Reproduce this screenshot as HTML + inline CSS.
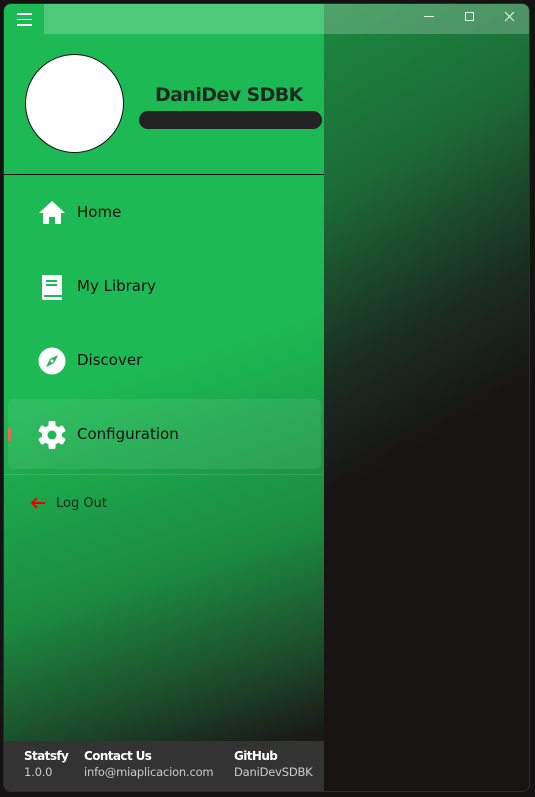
<!DOCTYPE html>
<html><head><meta charset="utf-8"><style>
*{margin:0;padding:0;box-sizing:border-box}
html,body{width:535px;height:797px;background:#141212;overflow:hidden;font-family:"Liberation Sans","DejaVu Sans",sans-serif}
.win{position:absolute;left:3px;top:3px;width:527px;height:789px;border-radius:8px;overflow:hidden;border:1px solid #2e2c2c;background:#181414}
.right{position:absolute;left:320px;top:0;right:0;bottom:0;background:linear-gradient(150deg,#1b8a40 0%,#1c6a36 22%,#1a2c20 42%,#181414 55%,#181414 100%)}
.side{position:absolute;left:0;top:0;width:320px;height:788px;background:linear-gradient(162deg,#1db954 0%,#1db954 46%,#1b8a40 70%,#1c4a2a 84%,#1a1a18 93%,#181414 100%)}
.tb{position:absolute;left:40px;top:0;right:0;height:30px;background:rgba(255,255,255,0.22)}
.ham{position:absolute;left:13px;top:9px;width:15px}
.ham i{display:block;height:1.5px;background:#fff;margin-bottom:4px}
.ctl{position:absolute;top:0;height:30px;color:#e8f4ec;font-size:14px}
.avatar{position:absolute;left:21px;top:50px;width:99px;height:99px;border-radius:50%;background:#fff;border:1px solid #111}
.name{position:absolute;left:151px;top:80px;font-size:19px;color:#1c2a20;font-family:"DejaVu Sans",sans-serif;font-weight:bold;letter-spacing:-0.6px}
.bar{position:absolute;left:135px;top:107px;width:183px;height:18px;border-radius:9px;background:#222}
.hr{position:absolute;left:0;top:170px;width:320px;height:1px;background:#111}
.item{position:absolute;left:33px;font-size:15px;color:#111;font-family:"DejaVu Sans",sans-serif}
.item svg{position:absolute;left:0;top:0}
.item span{position:absolute;left:40px;top:5px;white-space:nowrap}
.sel{position:absolute;left:4px;top:395px;width:313px;height:70px;border-radius:5px;background:rgba(255,255,255,0.08)}
.ind{position:absolute;left:4px;top:424px;width:3px;height:13px;background:#e86a5a;border-radius:1px}
.hr2{position:absolute;left:0;top:470px;width:320px;height:1px;background:rgba(255,255,255,0.12)}
.foot{position:absolute;left:0;top:737px;width:320px;height:51px;background:#333}
.f{position:absolute;color:#fff;font-size:11px;font-family:"DejaVu Sans",sans-serif}
.f b{display:block;font-size:12px;letter-spacing:-0.6px}
.f span{display:block;color:#ccc;margin-top:2px;font-size:11.5px;letter-spacing:-0.2px}
</style></head><body>
<div class="win">
 <div class="right"></div>
 <div class="side">
  <div class="avatar"></div>
  <div class="name">DaniDev SDBK</div>
  <div class="bar"></div>
  <div class="hr"></div>
  <div class="item" style="top:194px"><svg width="30" height="30" viewBox="0 0 30 30"><path d="M15 3 L28 15 L24 15 L24 26 L18 26 L18 19 L12 19 L12 26 L6 26 L6 15 L2 15 Z" fill="#fff"/></svg><span>Home</span></div>
  <div class="item" style="top:268px"><svg width="30" height="30" viewBox="0 0 30 30"><path d="M5 3 H25 V23 H7 V25 H25 V28 H7 Q5 28 5 26 Z" fill="#fff"/><rect x="9" y="8" width="11" height="2" fill="#1db954"/><rect x="9" y="12" width="11" height="2" fill="#1db954"/></svg><span>My Library</span></div>
  <div class="item" style="top:342px"><svg width="30" height="30" viewBox="0 0 30 30"><circle cx="15" cy="15" r="13.5" fill="#fff"/><path d="M21 9 L17 17 L9 21 L13 13 Z" fill="#1db954"/><circle cx="15" cy="15" r="1.5" fill="#fff"/></svg><span>Discover</span></div>
  <div class="sel"></div><div class="ind"></div>
  <div class="item" style="top:416px"><svg width="30" height="30" viewBox="0 0 30 30"><g fill="#fff" transform="translate(15 15)"><circle r="10"/><rect x="-3.5" y="-14" width="7" height="28" rx="1.5"/><rect x="-3.5" y="-14" width="7" height="28" rx="1.5" transform="rotate(60)"/><rect x="-3.5" y="-14" width="7" height="28" rx="1.5" transform="rotate(120)"/></g><circle cx="15" cy="15" r="4.5" fill="#1db954"/></svg><span>Configuration</span></div>
  <div class="hr2"></div>
  <svg style="position:absolute;left:25px;top:492px" width="18" height="14" viewBox="0 0 18 14"><path d="M16 7 H3 M8 2 L3 7 L8 12" stroke="#e00" stroke-width="2" fill="none"/></svg>
  <div style="position:absolute;left:52px;top:492px;font-size:13px;color:#1a2a1e;font-family:'DejaVu Sans',sans-serif">Log Out</div>
  <div class="foot">
   <div class="f" style="left:20px;top:8px"><b>Statsfy</b><span>1.0.0</span></div>
   <div class="f" style="left:80px;top:8px"><b>Contact Us</b><span>info@miaplicacion.com</span></div>
   <div class="f" style="left:230px;top:8px"><b>GitHub</b><span>DaniDevSDBK</span></div>
  </div>
 </div>
 <div class="tb"></div>
 <div class="ham"><i></i><i></i><i></i></div>
 <div class="ctl" style="left:420px;top:12px;width:10px;height:1px;background:#e8f4ec"></div>
 <div class="ctl" style="left:461px;top:8px;width:9px;height:9px;border:1px solid #e8f4ec"></div>
 <svg style="position:absolute;left:500px;top:7px" width="11" height="11" viewBox="0 0 11 11"><path d="M1 1 L10 10 M10 1 L1 10" stroke="#e8f4ec" stroke-width="1.1"/></svg>
</div>
</body></html>
